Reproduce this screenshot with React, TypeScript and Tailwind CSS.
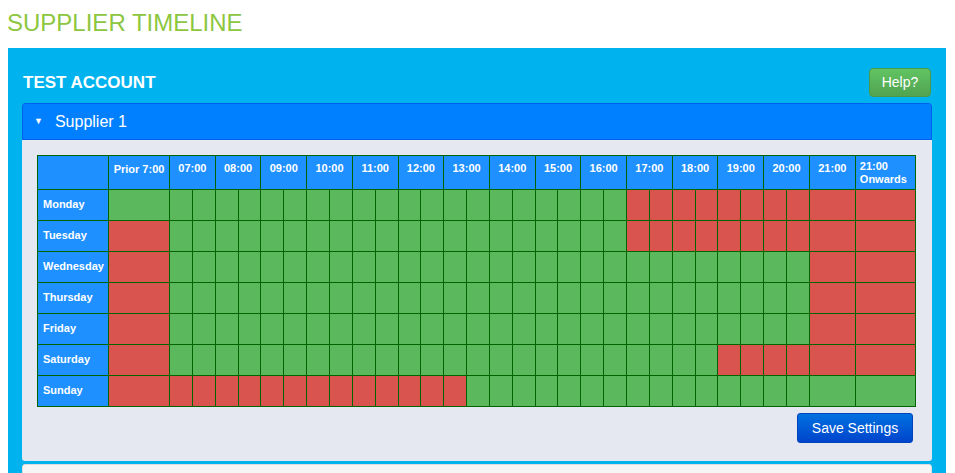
import React from "react";

const G = "G", R = "R";
function row(prior: string, halves: string[], h21: string, on: string) { return { prior, halves, h21, on }; }
const rep = (v: string, n: number) => Array(n).fill(v);
const data = [
  ["Monday", row(G, [...rep(G, 20), ...rep(R, 8)], R, R)],
  ["Tuesday", row(R, [...rep(G, 20), ...rep(R, 8)], R, R)],
  ["Wednesday", row(R, rep(G, 28), R, R)],
  ["Thursday", row(R, rep(G, 28), R, R)],
  ["Friday", row(R, rep(G, 28), R, R)],
  ["Saturday", row(R, [...rep(G, 24), ...rep(R, 4)], R, R)],
  ["Sunday", row(R, [...rep(R, 13), ...rep(G, 15)], G, G)],
] as const;
const hours = ["07:00","08:00","09:00","10:00","11:00","12:00","13:00","14:00","15:00","16:00","17:00","18:00","19:00","20:00"];

function Cell({ c, span }: { c: string; span?: number }) {
  return <td colSpan={span} className={`border border-[#006400] p-0 h-[31px] ${c === G ? "bg-[#5cb85c]" : "bg-[#d9534f]"}`} />;
}

export default function App() {
  return (
    <div className="w-[955px] h-[473px] overflow-hidden bg-white" style={{ fontFamily: '"Liberation Sans", Arial, sans-serif' }}>
      <h1 className="text-[#8dc63f] text-[24px] leading-none pl-[7px] pt-[11px] h-[48px]">SUPPLIER TIMELINE</h1>
      <div className="mx-[8px] w-[938px] bg-[#00b3ee] px-[14px] pt-[15px] h-[440px]">
        <div className="flex items-center justify-between h-[40px] pb-[1px]">
          <div className="text-white font-bold text-[17px] pl-[1px]">TEST ACCOUNT</div>
          <button className="w-[62px] h-[29px] rounded-[4px] border border-[#4a9a4a] bg-gradient-to-b from-[#62c462] to-[#51a351] text-white text-[14px] mr-[1px]">Help?</button>
        </div>
        <div className="w-[910px] rounded-[3px] overflow-hidden">
          <div className="h-[37px] bg-[#0080ff] border border-[#0060ee] rounded-t-[3px] flex items-center pl-[11px] text-white text-[16px]">
            <span className="text-[9px] mr-[12px]">▼</span>Supplier 1
          </div>
          <div className="bg-[#e5e8f0] px-[15px] pt-[15px] h-[321px]">
            <table className="border-collapse w-[878px] table-fixed text-white text-[11px] font-bold">
              <colgroup>
                <col className="w-[71px]" />
                <col className="w-[61px]" />
                {rep(0, 28).map((_, i) => <col key={i} className="w-[22.85px]" />)}
                <col className="w-[46px]" />
                <col className="w-[60px]" />
              </colgroup>
              <thead>
                <tr className="h-[34px]">
                  <th className="border border-[#006400] bg-[#1e90ff]" />
                  <th className="border border-[#006400] bg-[#1e90ff] align-top pt-[5px] text-center font-bold">Prior 7:00</th>
                  {hours.map(h => <th key={h} colSpan={2} className="border border-[#006400] bg-[#1e90ff] align-top pt-[4px] font-bold">{h}</th>)}
                  <th className="border border-[#006400] bg-[#1e90ff] align-top pt-[4px] font-bold">21:00</th>
                  <th className="border border-[#006400] bg-[#1e90ff] align-top pt-[4px] pl-[4px] text-left leading-[13px] font-bold">21:00<br />Onwards</th>
                </tr>
              </thead>
              <tbody>
                {data.map(([d, r]) => (
                  <tr key={d}>
                    <td className="border border-[#006400] bg-[#1e90ff] align-top pt-[6px] pl-[5px] h-[31px]">{d}</td>
                    <Cell c={r.prior} />
                    {r.halves.map((c, i) => <Cell key={i} c={c} />)}
                    <Cell c={r.h21} />
                    <Cell c={r.on} />
                  </tr>
                ))}
              </tbody>
            </table>
            <div className="flex justify-end mt-[6px] pr-[4px]">
              <button className="w-[116px] h-[30px] rounded-[3px] bg-gradient-to-b from-[#0070e0] to-[#0044cc] border border-[#0044bb] text-white text-[14px]">Save Settings</button>
            </div>
          </div>
        </div>
        <div className="w-[910px] mt-[3px] h-[20px] bg-[#f5f5f5] rounded-t-[3px] border border-[#dddddd]" />
      </div>
    </div>
  );
}
